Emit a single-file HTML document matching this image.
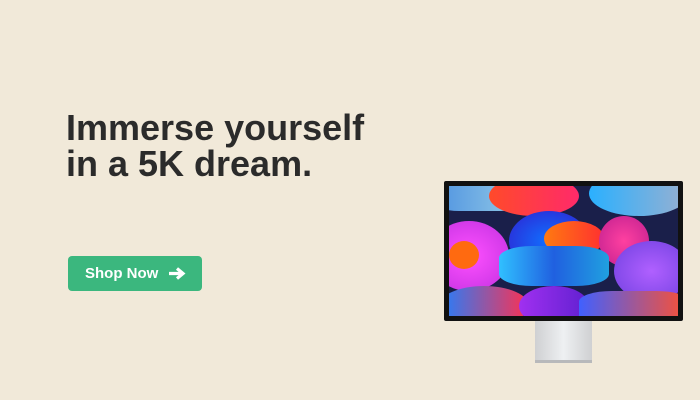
<!DOCTYPE html>
<html><head><meta charset="utf-8"><style>
body{margin:0;width:700px;height:400px;background:#f1e9d9;position:relative;overflow:hidden;font-family:"Liberation Sans",sans-serif}
h1{position:absolute;left:66px;top:110px;margin:0;font-size:36px;line-height:36px;font-weight:700;color:#2b2b2b;letter-spacing:0px}
.btn{position:absolute;left:68px;top:256px;width:134px;height:35px;background:#3bb77e;border-radius:4px;color:#fff;font-weight:700;font-size:15px;line-height:35px}
.btn span{position:absolute;left:17px}
.frame{position:absolute;left:444px;top:181px;width:239px;height:140px;background:#111;border-radius:2px}
.screen{position:absolute;left:5px;top:5px;width:229px;height:130px;overflow:hidden;background:#1a1f4a}
.screen div{position:absolute;border-radius:50%}
.stand{position:absolute;left:535px;top:321px;width:57px;height:42px;background:linear-gradient(90deg,#cfd0d2,#eef0f2 50%,#cfd0d2)}
.stand:after{content:"";position:absolute;left:0;bottom:0;width:57px;height:3px;background:#b8b9bb}
</style></head><body>
<h1>Immerse yourself<br>in a 5K dream.</h1>
<div class="btn"><span>Shop Now</span>
<svg style="position:absolute;left:100px;top:10px" width="18" height="15" viewBox="0 0 18 15"><path d="M1 7.5H14M9 2.5L15 7.5L9 12.5" stroke="#fff" stroke-width="3.2" fill="none" stroke-linejoin="miter"/></svg></div>
<div class="frame"><div class="screen">
<div style="left:-20px;top:-20px;width:100px;height:45px;background:linear-gradient(90deg,#4a8fe0,#9ad0e8);border-radius:30%"></div>
<div style="left:40px;top:-10px;width:90px;height:40px;background:linear-gradient(90deg,#ff4a2a,#ff2a6a)"></div>
<div style="left:140px;top:-15px;width:100px;height:45px;background:linear-gradient(90deg,#2ab0ff,#9ab0d0)"></div>
<div style="left:-20px;top:35px;width:80px;height:70px;background:radial-gradient(#ff50ff,#c030e0)"></div>
<div style="left:60px;top:25px;width:80px;height:60px;background:radial-gradient(#1070ff,#3020d0)"></div>
<div style="left:95px;top:35px;width:60px;height:35px;background:linear-gradient(90deg,#ff7a10,#ff3030)"></div>
<div style="left:150px;top:30px;width:50px;height:50px;background:radial-gradient(#ff40a0,#c02090)"></div>
<div style="left:165px;top:55px;width:75px;height:60px;background:radial-gradient(#b060ff,#7040e0)"></div>
<div style="left:0px;top:55px;width:30px;height:28px;background:#ff6a10"></div>
<div style="left:50px;top:60px;width:110px;height:40px;background:linear-gradient(90deg,#30c0ff,#2060e0,#20a0e0);border-radius:30%"></div>
<div style="left:-10px;top:100px;width:90px;height:40px;background:linear-gradient(90deg,#2080ff,#ff3050)"></div>
<div style="left:70px;top:100px;width:70px;height:40px;background:linear-gradient(90deg,#a030f0,#6020d0)"></div>
<div style="left:130px;top:105px;width:110px;height:35px;background:linear-gradient(90deg,#4060ff,#ff5030);border-radius:30%"></div>
</div></div>
<div class="stand"></div>
</body></html>
